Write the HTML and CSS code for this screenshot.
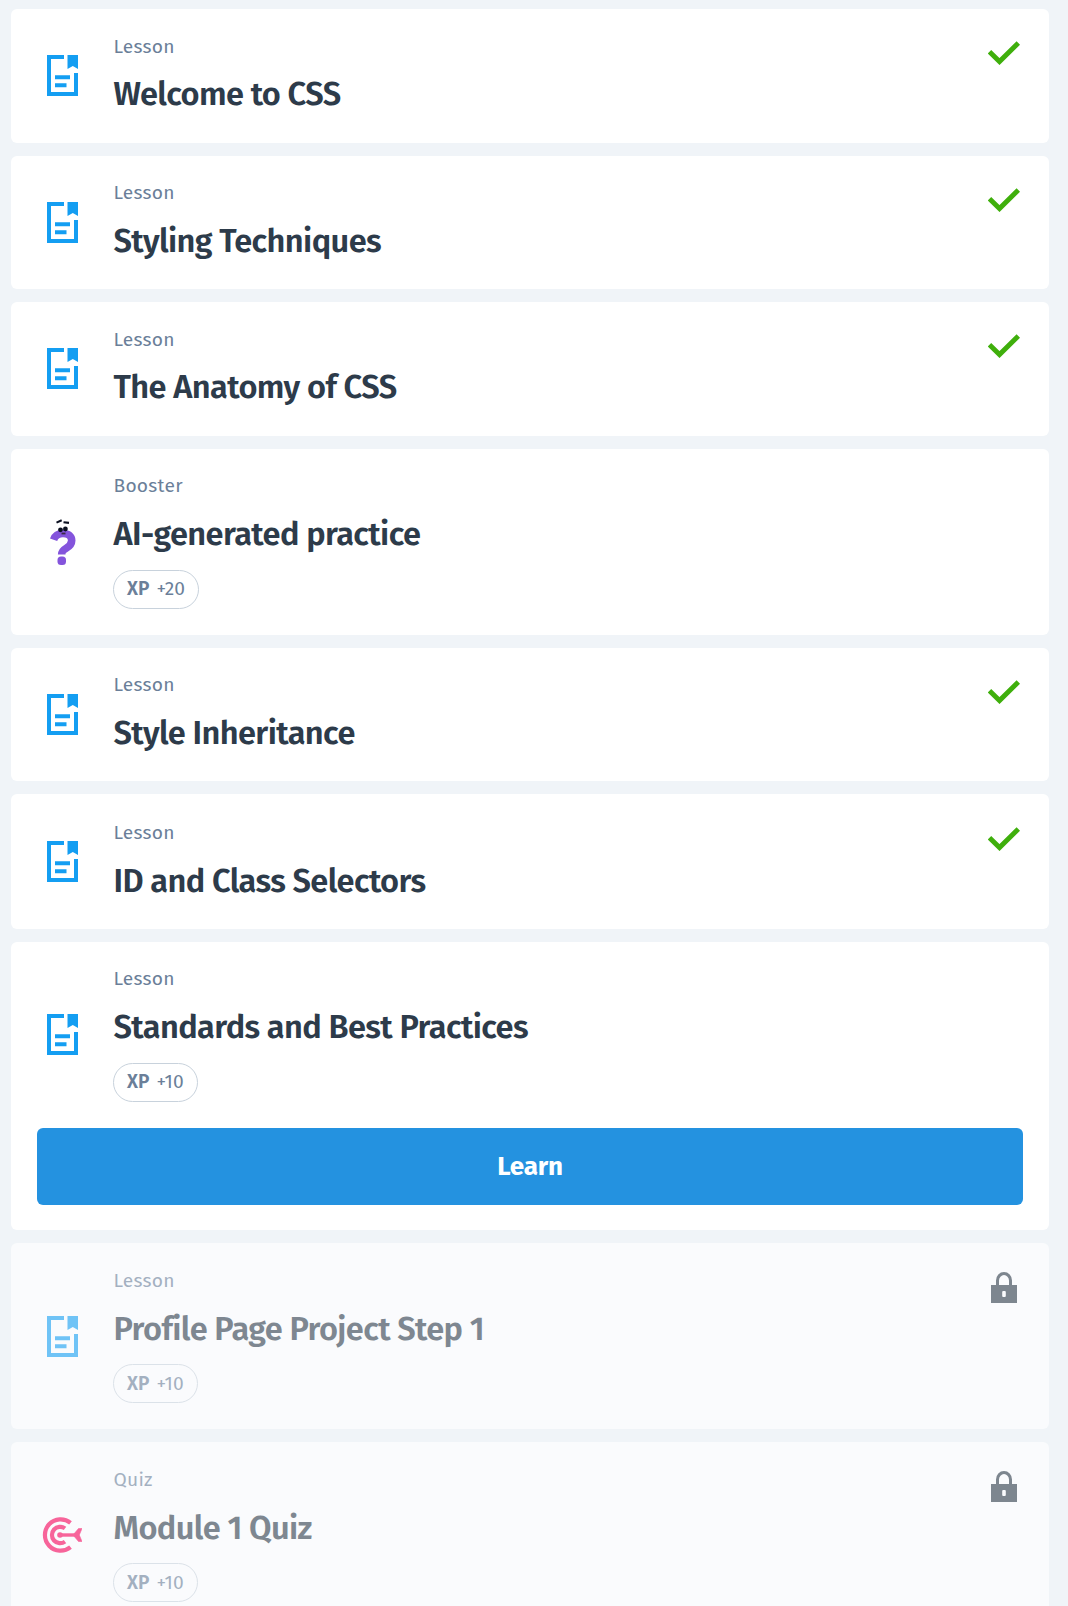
FILE: index.html
```
<!DOCTYPE html>
<html lang="en">
<head>
<meta charset="utf-8">
<title>CSS course</title>
<link rel="stylesheet" href="styles.css">
</head>
<body>
<svg class="sprite" aria-hidden="true">
  <symbol id="doc" viewBox="0 0 31 41">
    <path d="M0 0h17v4H4v33h23V18h4v23H0z"/>
    <path d="M20.500 0H31v14l-5.200-3-5.300 3z"/>
    <path d="M8 20.300h15v4H8zM8 28.200h11.500v4H8z"/>
  </symbol>
  <symbol id="check" viewBox="0 0 32 24">
    <path d="M1.500 10.800l10 9.800L30.300 2" fill="none" stroke="currentColor" stroke-width="4.900"/>
  </symbol>
  <symbol id="lock" viewBox="0 0 26 31">
    <path d="M6.500 14V8.500a6.500 6.900 0 0 1 13 0V14" fill="none" stroke="currentColor" stroke-width="3"/>
    <path fill-rule="evenodd" d="M0 13h26v18H0zM12.200 19q-1 0-1 1v4q0 1 1 1h1.600q1 0 1-1v-4q0-1-1-1z"/>
  </symbol>
</svg>
<main class="list">
  <article class="card">
    <div class="row"><svg class="icon doc"><use href="#doc"/></svg>
      <div class="text"><p class="kind">Lesson</p><h2 class="title">Welcome to CSS</h2></div>
      <svg class="check"><use href="#check"/></svg></div>
  </article>
  <article class="card snug">
    <div class="row"><svg class="icon doc"><use href="#doc"/></svg>
      <div class="text"><p class="kind">Lesson</p><h2 class="title">Styling Techniques</h2></div>
      <svg class="check"><use href="#check"/></svg></div>
  </article>
  <article class="card">
    <div class="row"><svg class="icon doc"><use href="#doc"/></svg>
      <div class="text"><p class="kind">Lesson</p><h2 class="title">The Anatomy of CSS</h2></div>
      <svg class="check"><use href="#check"/></svg></div>
  </article>
  <article class="card reward booster-card">
    <div class="row">
      <svg class="icon booster" viewBox="0 0 26 46">
        <path d="M3.600 20.700C5.200 16 8.500 14.500 13 14.500c5.500 0 8.700 2.700 8.700 7 0 4.200-2.500 6-5.500 7.700-3.500 2-4.500 3.300-4.500 6.300" fill="none" stroke="#8454dc" stroke-width="7.600"/>
        <rect x="7.500" y="37.500" width="8.500" height="8.500" rx="3.500" fill="#8454dc"/>
        <path d="M6.500 3.600l5.200-2.300M13.500 3.200l5.500.7" stroke="#0b1020" stroke-width="2.100"/>
        <circle cx="10.500" cy="10.800" r="2.400" fill="#0b1020"/><circle cx="15.400" cy="10" r="2.400" fill="#0b1020"/>
        <path d="M11.500 14.500h4" stroke="#3a2945" stroke-width="1.800"/>
      </svg>
      <div class="text"><p class="kind">Booster</p><h2 class="title">AI-generated practice</h2>
        <span class="xp"><b>XP</b> +20</span></div></div>
  </article>
  <article class="card snug">
    <div class="row"><svg class="icon doc"><use href="#doc"/></svg>
      <div class="text"><p class="kind">Lesson</p><h2 class="title">Style Inheritance</h2></div>
      <svg class="check"><use href="#check"/></svg></div>
  </article>
  <article class="card loose">
    <div class="row"><svg class="icon doc"><use href="#doc"/></svg>
      <div class="text"><p class="kind">Lesson</p><h2 class="title">ID and Class Selectors</h2></div>
      <svg class="check"><use href="#check"/></svg></div>
  </article>
  <article class="card reward current">
    <div class="row"><svg class="icon doc"><use href="#doc"/></svg>
      <div class="text"><p class="kind">Lesson</p><h2 class="title">Standards and Best Practices</h2>
        <span class="xp"><b>XP</b> +10</span></div></div>
    <button class="learn">Learn</button>
  </article>
  <article class="card reward locked">
    <div class="row"><svg class="icon doc"><use href="#doc"/></svg>
      <div class="text"><p class="kind">Lesson</p><h2 class="title">Profile Page Project Step 1</h2>
        <span class="xp"><b>XP</b> +10</span></div>
      <svg class="lock"><use href="#lock"/></svg></div>
  </article>
  <article class="card reward locked">
    <div class="row">
      <svg class="icon quiz" viewBox="0 0 40 36">
        <path d="M28.500 5.800A15.700 15.700 0 1 0 28.500 30.200" stroke-width="4.200"/>
        <path d="M23 11.400A8.200 8.200 0 1 0 23 24.600" stroke-width="4.200"/>
        <path d="M18 18h17" stroke-width="3.400"/>
        <circle cx="18" cy="18" r="2.800" fill="#f7649a" stroke="none"/>
        <path d="M31 18l5.500-6.500H40L37.300 18l2.700 6.500h-3.500z" fill="#f7649a" stroke="#f7649a" stroke-width=".6"/>
      </svg>
      <div class="text"><p class="kind">Quiz</p><h2 class="title">Module 1 Quiz</h2>
        <span class="xp"><b>XP</b> +10</span></div>
      <svg class="lock"><use href="#lock"/></svg></div>
  </article>
</main>
</body>
</html>
```
FILE: styles.css
```
* { box-sizing: border-box; }
html { overflow: hidden; }
body {
  margin: 0;
  height: 1606px;
  overflow: hidden;
  background: #f0f4f8;
  font-family: "Fira Sans", "Noto Sans", sans-serif;
}
.sprite { display: none; }
.list {
  display: flex;
  flex-direction: column;
  gap: 13px;
  padding: 9px 19px 0 11px;
}
.card {
  flex: none;
  height: 134px;
  border-radius: 6px;
  background: #fff;
}
.snug { height: 133px; }
.loose { height: 135px; }
.reward { height: 186px; }
.current { height: 288px; }
.row {
  display: flex;
  align-items: center;
  height: 100%;
  padding: 0 26px;
}
.current .row { height: 186px; }
.text {
  flex: 1;
  align-self: flex-start;
  margin-left: 35px;
  padding-top: 26px;
}
.snug .text, .current .text, .booster-card .text { padding-top: 25px; }
.loose .text { padding-top: 27px; }
.icon { flex: none; fill: #149ef2; }
.doc { width: 31px; height: 41px; margin: 0 0 1px 10px; }
.locked .doc { margin-bottom: 0; }
.booster { width: 26px; height: 46px; margin: 0 2px 0 13px; }
.quiz { width: 40px; height: 36px; margin: 0 -4px 0 5px; fill: none; stroke: #f7649a; }
.kind {
  margin: 0 0 15px 0.5px;
  color: #6b7f99;
  font-size: 19.2px;
  line-height: 24px;
  letter-spacing: 0.25px;
}
.title {
  margin: 0 0 14px 0.5px;
  color: #2d3b4a;
  font-size: 32.6px;
  font-weight: 600;
  line-height: 42px;
  letter-spacing: -0.61px;
}
.snug .kind, .current .kind, .booster-card .kind, .loose .kind, .locked .kind { margin-bottom: 16px; }
.locked .title { margin-bottom: 13px; }
.xp {
  display: flex;
  align-items: center;
  gap: 7px;
  width: max-content;
  height: 39px;
  padding: 0 13px 2px;
  border: 1px solid #c8d2dc;
  border-radius: 20px;
  color: #6b7f99;
  font-size: 19.2px;
}
.locked .xp { padding-bottom: 0; }
.xp b { font-weight: 600; }
.check {
  align-self: flex-start;
  width: 32px;
  height: 24px;
  margin: 32px 3px 0 0;
  color: #3faf0c;
}
.loose .check { margin-top: 33px; }
.lock {
  align-self: flex-start;
  width: 26px;
  height: 31px;
  margin: 29px 6px 0 0;
  color: #7d868f;
  fill: #7d868f;
}
.learn {
  display: block;
  width: calc(100% - 52px);
  height: 77px;
  margin: 0 26px;
  border: 0;
  border-radius: 6px;
  background: #2492e0;
  color: #fff;
  font: 700 26px "Fira Sans", sans-serif;
  letter-spacing: -0.2px;
}
.locked { background: #fafbfd; }
.locked .text, .locked .doc { opacity: 0.6; }
```
